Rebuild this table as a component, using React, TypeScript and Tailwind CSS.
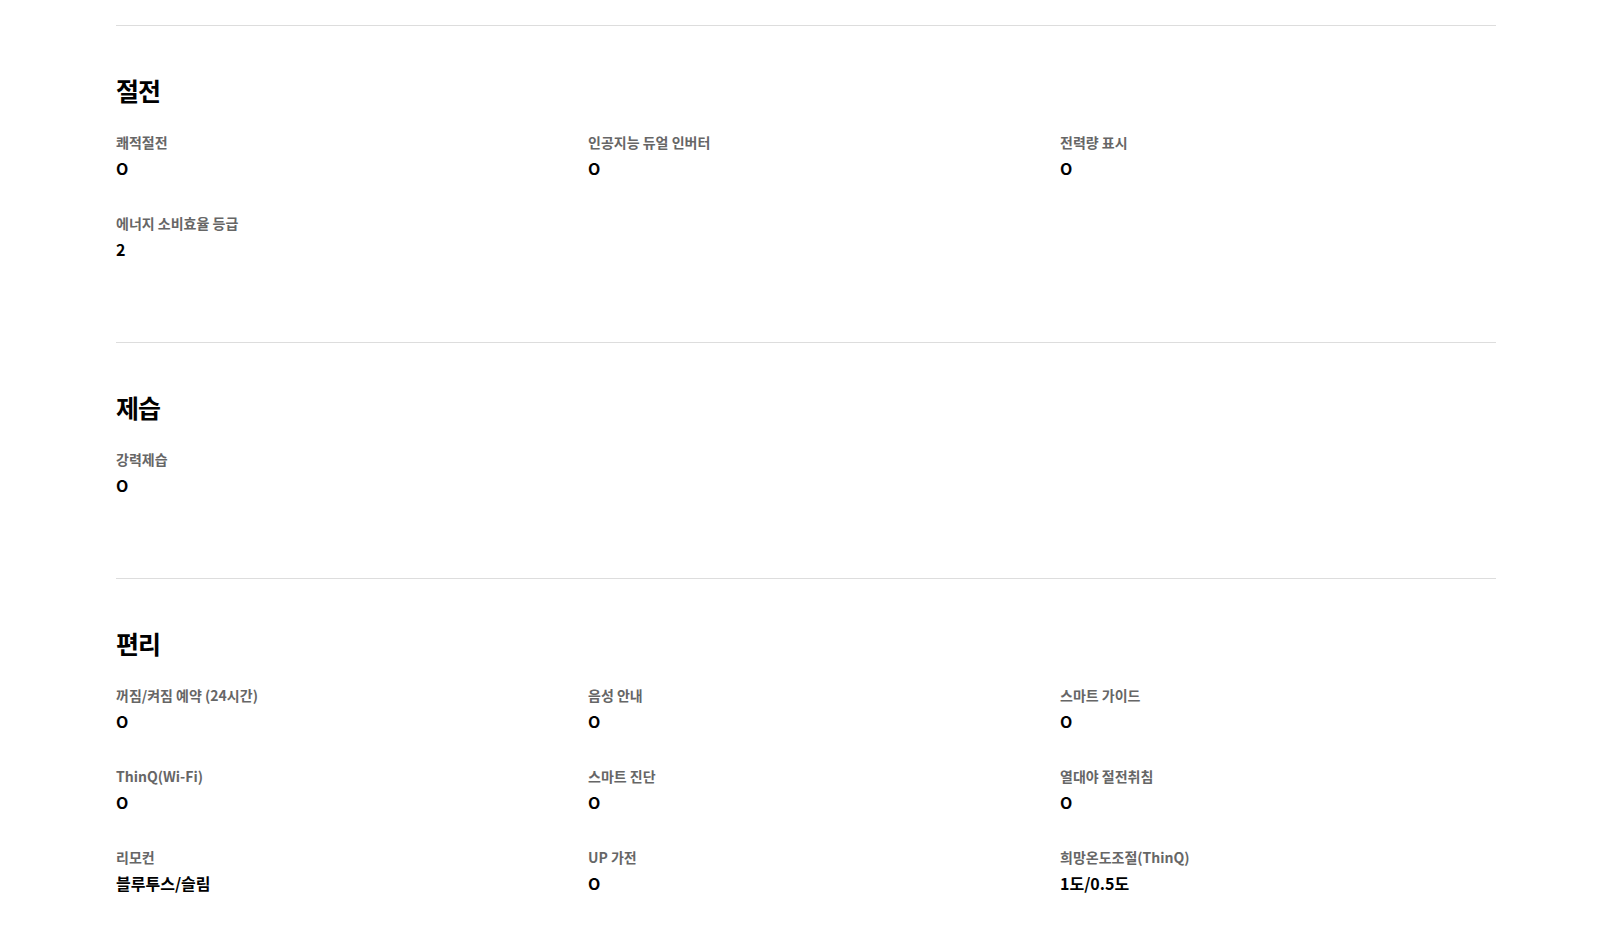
import React from 'react';

type Spec = { label: string; value: string };
type Section = { title: string; items: Spec[] };

const sections: Section[] = [
  {
    title: '절전',
    items: [
      { label: '쾌적절전', value: 'O' },
      { label: '인공지능 듀얼 인버터', value: 'O' },
      { label: '전력량 표시', value: 'O' },
      { label: '에너지 소비효율 등급', value: '2' },
    ],
  },
  {
    title: '제습',
    items: [{ label: '강력제습', value: 'O' }],
  },
  {
    title: '편리',
    items: [
      { label: '꺼짐/켜짐 예약 (24시간)', value: 'O' },
      { label: '음성 안내', value: 'O' },
      { label: '스마트 가이드', value: 'O' },
      { label: 'ThinQ(Wi-Fi)', value: 'O' },
      { label: '스마트 진단', value: 'O' },
      { label: '열대야 절전취침', value: 'O' },
      { label: '리모컨', value: '블루투스/슬림' },
      { label: 'UP 가전', value: 'O' },
      { label: '희망온도조절(ThinQ)', value: '1도/0.5도' },
    ],
  },
];

export default function App() {
  return (
    <div
      className="min-h-screen bg-white text-black pt-[25px]"
      style={{ fontFamily: '"Noto Sans CJK KR", "Noto Sans", sans-serif' }}
    >
      <div className="ml-[116px] w-[1380px]">
        {sections.map((s) => (
          <section key={s.title} className="border-t border-[#dddddd] pt-[48px] pb-[81px]">
            {/* 섹션 제목 */}
            <h2 className="text-[25px] leading-[32px] font-bold tracking-[-1px] text-black">{s.title}</h2>
            <dl className="mt-[26px] grid grid-cols-3 gap-x-[36px] gap-y-[33px]">
              {s.items.map((it) => (
                <div key={it.label}>
                  <dt className="text-[14px] leading-[20px] font-bold text-[#666666]">{it.label}</dt>
                  <dd className="mt-1 text-[16px] leading-[24px] font-bold text-black">{it.value}</dd>
                </div>
              ))}
            </dl>
          </section>
        ))}
      </div>
    </div>
  );
}
